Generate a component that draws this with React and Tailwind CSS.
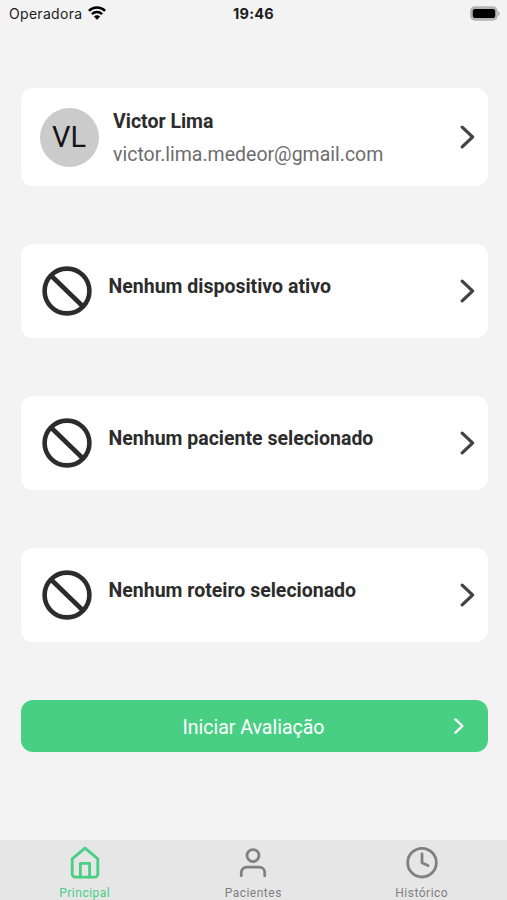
const ChevronIcon = ({ className, strokeWidth = 3.2 }) => (
    <svg className={className} viewBox="0 0 15 24" fill="none" stroke="currentColor" strokeWidth={strokeWidth} strokeLinecap="round" strokeLinejoin="round">
        <path d="M2.2 2.2L12.6 12 2.2 21.8" />
    </svg>
);

const BanIcon = () => (
    <svg className="w-[50px] h-[50px] shrink-0 text-[#2c2c2c]" viewBox="0 0 50 50" fill="none" stroke="currentColor" strokeWidth="4.6">
        <circle cx="25" cy="25" r="22.4" />
        <path d="M9 9.5L41 40.5" />
    </svg>
);

const HomeIcon = () => (
    <svg className="w-[34px] h-[34px]" viewBox="0 0 34 34" fill="none" stroke="currentColor" strokeWidth="2.8" strokeLinecap="round" strokeLinejoin="round">
        <path d="M4.2 12.8L17 2.2l12.8 10.6V28a3.2 3.2 0 01-3.2 3.2H7.4A3.2 3.2 0 014.2 28z" />
        <path d="M12.4 31.2V17.4h9.2v13.8" />
    </svg>
);

const UserIcon = () => (
    <svg className="w-[34px] h-[34px]" viewBox="0 0 34 34" fill="none" stroke="currentColor" strokeWidth="2.8" strokeLinecap="round" strokeLinejoin="round">
        <circle cx="17" cy="9.6" r="6" />
        <path d="M5.3 29.8v-3.2a5.4 5.4 0 015.4-5.4h12.6a5.4 5.4 0 015.4 5.4v3.2" />
    </svg>
);

const ClockIcon = () => (
    <svg className="w-[34px] h-[34px]" viewBox="0 0 34 34" fill="none" stroke="currentColor" strokeWidth="2.8" strokeLinecap="round" strokeLinejoin="round">
        <circle cx="17" cy="16.7" r="14.3" />
        <path d="M17 7.9v8.8l6 2.9" />
    </svg>
);

const StatusBar = () => (
    <div className="grid grid-cols-3 items-center h-7 pl-[9px] pr-[7px] text-[#1c1c1c] font-['Inter',sans-serif]">
        <div className="flex items-center gap-[6px] pb-[2px]">
            <span className="text-[14px] tracking-[0.3px]">Operadora</span>
            <svg className="w-[18px] h-[14px] text-black" viewBox="0 0 18 14" fill="none" stroke="currentColor" strokeWidth="2.4">
                <path d="M0.9 4.9a11.5 11.5 0 0116.2 0" />
                <path d="M3.9 8.1a7.2 7.2 0 0110.2 0" />
                <path d="M9 13.8L5.9 10.6a4.4 4.4 0 016.2 0z" fill="currentColor" stroke="none" />
            </svg>
        </div>
        <span className="-ml-[2px] text-center text-[14.5px] tracking-[0.25px] font-bold">19:46</span>
        <svg className="w-[30px] h-[15px] mb-[2px] justify-self-end" viewBox="0 0 30 15">
            <rect x="0.9" y="1.1" width="26" height="12.8" rx="4" fill="#b4b4b4" stroke="#b4b4b4" strokeWidth="1.6" />
            <rect x="2.8" y="3" width="22.4" height="9" rx="2" fill="#000" />
            <path d="M28.2 5.2v4.6c1-.4 1.5-1.2 1.5-2.3s-.5-1.9-1.5-2.3z" fill="#a9a9a9" />
        </svg>
    </div>
);

const items = [
    { id: 1, title: 'Nenhum dispositivo ativo' },
    { id: 2, title: 'Nenhum paciente selecionado' },
    { id: 3, title: 'Nenhum roteiro selecionado' },
];

const tabs = [
    { label: 'Principal', icon: <HomeIcon />, color: 'text-[#48cf84]' },
    { label: 'Pacientes', icon: <UserIcon />, color: 'text-[#808080]' },
    { label: 'Histórico', icon: <ClockIcon />, color: 'text-[#808080]' },
];

const App = () => {
    return (
        <div className="flex flex-col w-full h-screen overflow-hidden bg-[#f3f3f3] font-['Roboto',sans-serif]">
            <StatusBar />

            <main className="flex-1 flex flex-col gap-[58px] pt-[60px] pl-[20.5px] pr-[19.5px]">
                {/* Profile */}
                <div className="flex items-center h-[98px] shrink-0 pl-[19.5px] pr-[13px] rounded-[12px] bg-white">
                    <div className="w-[59px] h-[59px] flex items-center justify-center pt-[2px] pr-[1px] rounded-full bg-[#cbcbcb] text-[29px] text-[#151515]">
                        VL
                    </div>
                    <div className="flex-1 ml-[14px] pt-[2px]">
                        <h1 className="text-[19.5px] leading-[33px] font-bold text-[#2c2c2c]">Victor Lima</h1>
                        <p className="text-[19.5px] leading-[33px] text-[#6d6d6d]">victor.lima.medeor@gmail.com</p>
                    </div>
                    <ChevronIcon className="w-[15px] h-6 text-[#444]" />
                </div>

                {/* Current selection */}
                {items.map((item) => (
                    <div key={item.id} className="flex items-center h-[94.1px] shrink-0 pl-[21px] pr-[13px] rounded-[12px] bg-white">
                        <BanIcon />
                        <h2 className="flex-1 ml-[17px] pb-[8px] text-[19.5px] leading-6 font-bold text-[#2c2c2c]">
                            {item.title}
                        </h2>
                        <ChevronIcon className="w-[15px] h-6 text-[#444]" />
                    </div>
                ))}

                <button className="relative flex items-center justify-center h-[52px] shrink-0 pt-[2px] pr-[1px] rounded-[12px] bg-[#48cf84] text-white text-[19.5px]">
                    Iniciar Avaliação
                    <ChevronIcon className="absolute top-[18px] right-6 w-[10px] h-4" strokeWidth={3.6} />
                </button>
            </main>

            {/* Tab bar */}
            <nav className="grid grid-cols-3 h-[60px] shrink-0 pl-[0.5px] pr-[1px] bg-[#e6e6e6]">
                {tabs.map((tab) => (
                    <div key={tab.label} className={`flex flex-col items-center pt-[6px] ${tab.color}`}>
                        {tab.icon}
                        <span className="mt-[6px] text-[12px] leading-[14px] tracking-[0.5px]">{tab.label}</span>
                    </div>
                ))}
            </nav>
        </div>
    );
};

export default App;
